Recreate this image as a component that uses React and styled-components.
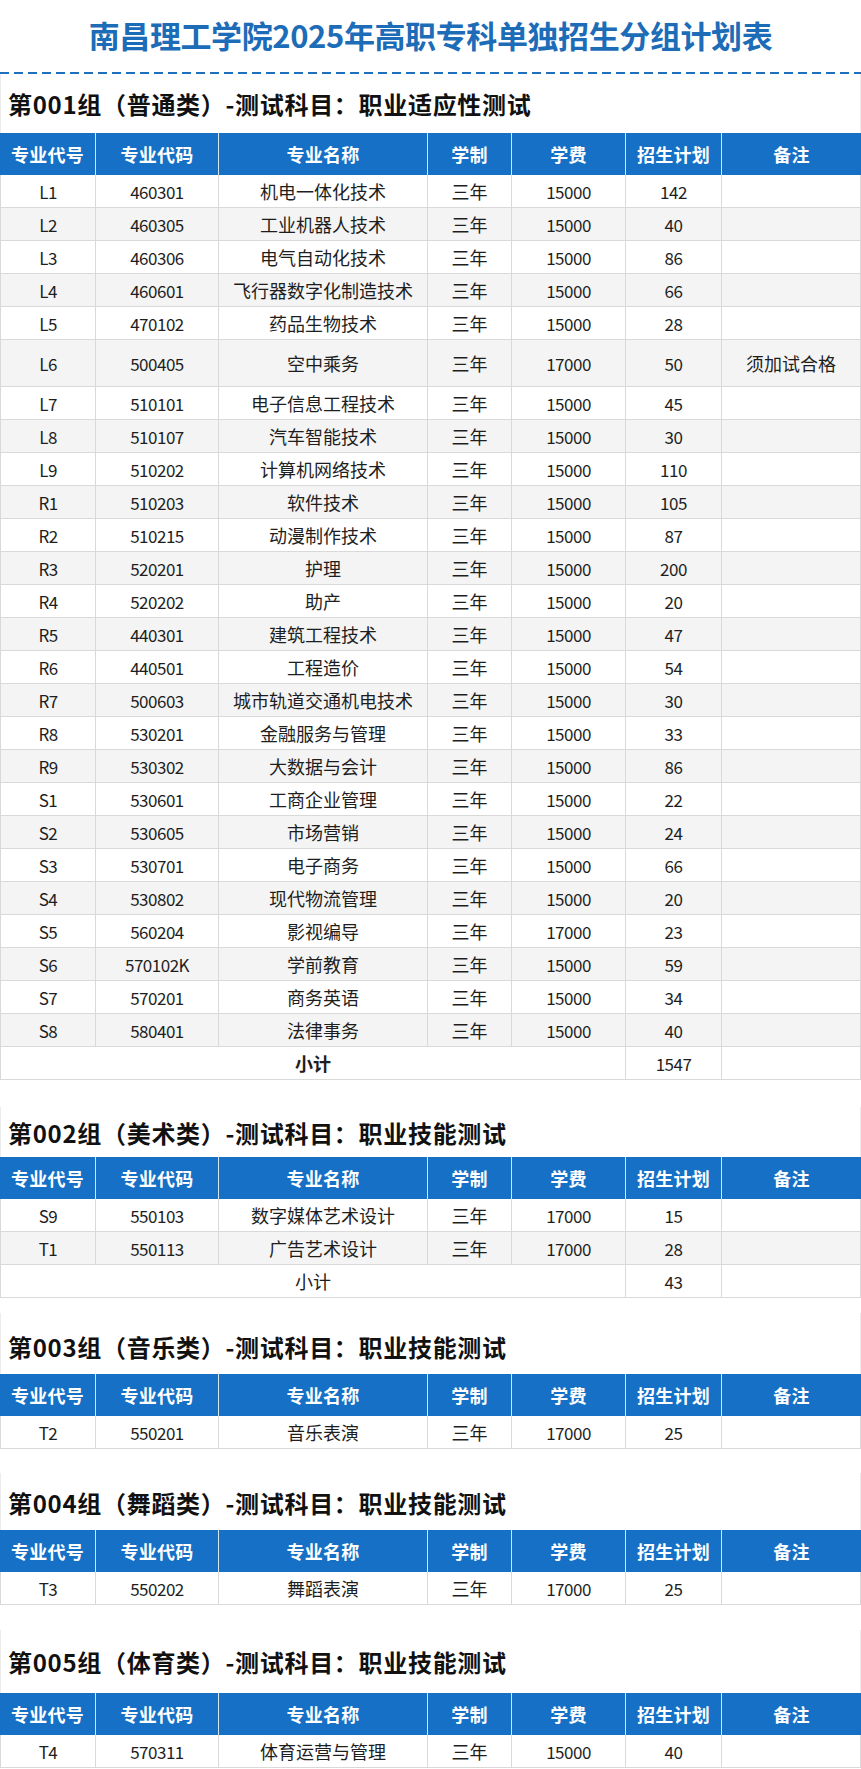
import React from "react";
import styled, { createGlobalStyle } from "styled-components";

const GlobalStyle = createGlobalStyle`
  body {
    margin: 0;
    background: #ffffff;
    font-family: "Noto Sans CJK SC", "Noto Sans", sans-serif;
  }
`;

const COLS = "96px 123px 209px 84px 114px 96px 139px";

const Page = styled.div`
  width: 861px;
  background: #ffffff;
`;

const TitleBar = styled.div`
  height: 72px;
  display: flex;
  align-items: center;
  justify-content: center;
`;

const Title = styled.h1`
  margin: 0;
  font-size: 31px;
  font-weight: 700;
  color: #1d6cb8;
  letter-spacing: -0.4px;
  line-height: 40px;
  padding-bottom: 2px;
`;

const DashLine = styled.div`
  height: 2px;
  background: repeating-linear-gradient(
    to right,
    #1f6fbf 0,
    #1f6fbf 9px,
    transparent 9px,
    transparent 14px
  );
`;

const Section = styled.section`
  margin-top: ${(p) => p.$gap}px;
  border-left: 1px solid #ececec;
  border-right: 1px solid #ececec;
`;

const Heading = styled.h2`
  margin: 0;
  padding: ${(p) => p.$pt}px 0 ${(p) => p.$pb}px 7px;
  font-size: 24px;
  line-height: 30px;
  font-weight: 700;
  color: #111;
  letter-spacing: 0.7px;
`;

const Grid = styled.div`
  margin: 0 -1px;
`;

const Row = styled.div`
  display: grid;
  grid-template-columns: ${COLS};
  height: ${(p) => p.$h || 33}px;
  background: ${(p) => (p.$shade ? "#f4f4f4" : "#ffffff")};
`;

const HeadRow = styled.div`
  display: grid;
  grid-template-columns: ${COLS};
  height: 42px;
  background: #1570c6;
`;

const HeadCell = styled.div`
  display: flex;
  align-items: center;
  justify-content: center;
  color: #ffffff;
  font-size: 18px;
  font-weight: 700;
  letter-spacing: 0.3px;
  border-right: 1px solid #d7e4f2;
  &:last-child {
    border-right: none;
  }
`;

const Cell = styled.div`
  box-sizing: border-box;
  display: flex;
  align-items: center;
  justify-content: center;
  grid-column: ${(p) => (p.$span ? `span ${p.$span}` : "auto")};
  border-right: 1px solid #d9d9d9;
  border-bottom: 1px solid #d9d9d9;
  color: #1e1e1e;
  white-space: nowrap;
  font-size: ${(p) => (p.$num ? 17 : 18)}px;
  letter-spacing: ${(p) => (p.$num ? "-0.5px" : "0")};
  font-weight: ${(p) => (p.$bold ? 700 : 400)};
  &:first-child {
    border-left: 1px solid #d9d9d9;
  }
`;

const HEADERS = ["专业代号", "专业代码", "专业名称", "学制", "学费", "招生计划", "备注"];

const groups = [
  {
    title: "第001组（普通类）-测试科目：职业适应性测试",
    gap: 0,
    pt: 15,
    pb: 14,
    total: "1547",
    boldTotal: true,
    rows: [
      ["L1", "460301", "机电一体化技术", "15000", "142"],
      ["L2", "460305", "工业机器人技术", "15000", "40"],
      ["L3", "460306", "电气自动化技术", "15000", "86"],
      ["L4", "460601", "飞行器数字化制造技术", "15000", "66"],
      ["L5", "470102", "药品生物技术", "15000", "28"],
      ["L6", "500405", "空中乘务", "17000", "50", "须加试合格", 47],
      ["L7", "510101", "电子信息工程技术", "15000", "45"],
      ["L8", "510107", "汽车智能技术", "15000", "30"],
      ["L9", "510202", "计算机网络技术", "15000", "110"],
      ["R1", "510203", "软件技术", "15000", "105"],
      ["R2", "510215", "动漫制作技术", "15000", "87"],
      ["R3", "520201", "护理", "15000", "200"],
      ["R4", "520202", "助产", "15000", "20"],
      ["R5", "440301", "建筑工程技术", "15000", "47"],
      ["R6", "440501", "工程造价", "15000", "54"],
      ["R7", "500603", "城市轨道交通机电技术", "15000", "30"],
      ["R8", "530201", "金融服务与管理", "15000", "33"],
      ["R9", "530302", "大数据与会计", "15000", "86"],
      ["S1", "530601", "工商企业管理", "15000", "22"],
      ["S2", "530605", "市场营销", "15000", "24"],
      ["S3", "530701", "电子商务", "15000", "66"],
      ["S4", "530802", "现代物流管理", "15000", "20"],
      ["S5", "560204", "影视编导", "17000", "23"],
      ["S6", "570102K", "学前教育", "15000", "59"],
      ["S7", "570201", "商务英语", "15000", "34"],
      ["S8", "580401", "法律事务", "15000", "40"],
    ],
  },
  {
    title: "第002组（美术类）-测试科目：职业技能测试",
    gap: 27,
    pt: 11,
    pb: 9,
    total: "43",
    rows: [
      ["S9", "550103", "数字媒体艺术设计", "17000", "15"],
      ["T1", "550113", "广告艺术设计", "17000", "28"],
    ],
  },
  {
    title: "第003组（音乐类）-测试科目：职业技能测试",
    gap: 15,
    pt: 19,
    pb: 12,
    rows: [["T2", "550201", "音乐表演", "17000", "25"]],
  },
  {
    title: "第004组（舞蹈类）-测试科目：职业技能测试",
    gap: 24,
    pt: 15,
    pb: 12,
    rows: [["T3", "550202", "舞蹈表演", "17000", "25"]],
  },
  {
    title: "第005组（体育类）-测试科目：职业技能测试",
    gap: 25,
    pt: 17,
    pb: 16,
    rows: [["T4", "570311", "体育运营与管理", "15000", "40"]],
  },
];

const GroupTable = ({ group }) => (
  <Section $gap={group.gap}>
    <Heading $pt={group.pt} $pb={group.pb}>
      {group.title}
    </Heading>
    <Grid>
      <HeadRow>
        {HEADERS.map((h) => (
          <HeadCell key={h}>{h}</HeadCell>
        ))}
      </HeadRow>
      {group.rows.map((r, i) => (
        <Row key={r[0]} $shade={i % 2 === 1} $h={r[6]}>
          <Cell $num>{r[0]}</Cell>
          <Cell $num>{r[1]}</Cell>
          <Cell>{r[2]}</Cell>
          <Cell>三年</Cell>
          <Cell $num>{r[3]}</Cell>
          <Cell $num>{r[4]}</Cell>
          <Cell>{r[5] || ""}</Cell>
        </Row>
      ))}
      {group.total && (
        <Row>
          <Cell $span={5} $bold={group.boldTotal}>
            小计
          </Cell>
          <Cell $num>{group.total}</Cell>
          <Cell />
        </Row>
      )}
    </Grid>
  </Section>
);

export default function App() {
  return (
    <Page>
      <GlobalStyle />
      <TitleBar>
        <Title>南昌理工学院2025年高职专科单独招生分组计划表</Title>
      </TitleBar>
      <DashLine />
      {groups.map((g) => (
        <GroupTable key={g.title} group={g} />
      ))}
    </Page>
  );
}
